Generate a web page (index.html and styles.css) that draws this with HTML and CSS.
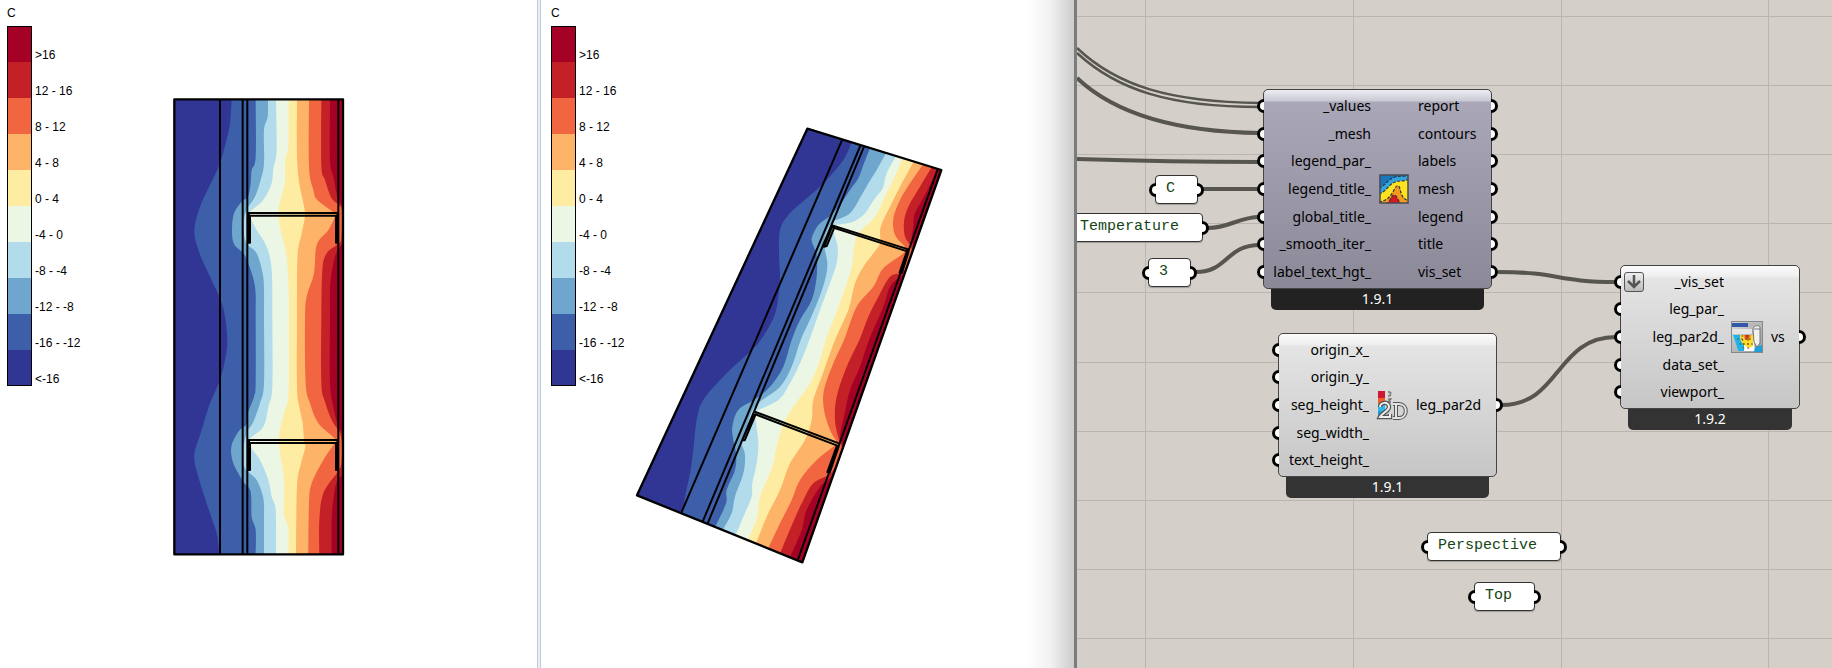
FILE: index.html
```html
<!DOCTYPE html>
<html lang="en">
<head>
<meta charset="utf-8">
<title>Thermal visualization</title>
<link rel="stylesheet" href="styles.css">
</head>
<body>
<main class="workspace">
  <section class="viewport viewport-top" aria-label="Top view">
    <svg class="scene" id="scene-top" aria-hidden="true"></svg>
    <div class="legend">
      <h2 class="legend-title">C</h2>
      <ul class="legend-list">
        <li class="t9">&gt;16</li><li class="t8">12 - 16</li><li class="t7">8 - 12</li><li class="t6">4 - 8</li><li class="t5">0 - 4</li>
        <li class="t4">-4 - 0</li><li class="t3">-8 - -4</li><li class="t2">-12 - -8</li><li class="t1">-16 - -12</li><li class="t0">&lt;-16</li>
      </ul>
    </div>
  </section>
  <div class="splitter"></div>
  <section class="viewport viewport-perspective" aria-label="Perspective view">
    <svg class="scene" id="scene-perspective" aria-hidden="true"></svg>
    <div class="legend">
      <h2 class="legend-title">C</h2>
      <ul class="legend-list">
        <li class="t9">&gt;16</li><li class="t8">12 - 16</li><li class="t7">8 - 12</li><li class="t6">4 - 8</li><li class="t5">0 - 4</li>
        <li class="t4">-4 - 0</li><li class="t3">-8 - -4</li><li class="t2">-12 - -8</li><li class="t1">-16 - -12</li><li class="t0">&lt;-16</li>
      </ul>
    </div>
  </section>
  <section class="canvas" aria-label="Node canvas">
    <svg class="wires" width="755" height="668" viewBox="1077 0 755 668" aria-hidden="true">
      <path class="grid" d="M1145.5 0V4000M1353.5 0V4000M1561.5 0V4000M1768.5 0V4000M1077 16.5H5000M1077 85.5H5000M1077 154.5H5000M1077 223.5H5000M1077 292.5H5000M1077 362.5H5000M1077 431.5H5000M1077 500.5H5000M1077 569.5H5000M1077 638.5H5000"/>
      <path class="wire thin" d="M1077 48C1117 86 1170 102 1260 103M1077 53C1117 90 1170 107 1260 107"/>
      <path class="wire" d="M1077 78C1115 114 1175 132 1260 133M1077 159C1140 161 1180 162 1260 162M1202 189H1260M1208 228C1230 228 1238 217 1260 217M1196 272C1228 272 1226 245 1260 245M1498 272C1560 272 1555 282 1616 282M1502 405C1560 405 1556 337 1616 337"/>
    </svg>

    <div class="panel panel-c port-in port-out">C</div>
    <div class="panel panel-temperature port-out">Temperature</div>
    <div class="panel panel-three port-in port-out">3</div>
    <div class="panel panel-perspective port-in port-out">Perspective</div>
    <div class="panel panel-top port-in port-out">Top</div>

    <article class="node node-mesh selected">
      <div class="node-body">
        <ul class="inputs"><li>_values</li><li>_mesh</li><li>legend_par_</li><li>legend_title_</li><li>global_title_</li><li>_smooth_iter_</li><li>label_text_hgt_</li></ul>
        <svg class="icon" width="30" height="30" viewBox="0 0 30 30" aria-hidden="true">
          <clipPath id="m"><rect x="1" y="1" width="28" height="28"/></clipPath>
          <g clip-path="url(#m)">
            <rect width="30" height="30" fill="#1877bd"/>
            <path d="M0 14C6 12 9 5 16 3S26 4 30 0V30H0Z" fill="#35a4dc"/>
            <path d="M0 20C7 18 10 10 16 8S25 8 30 5V30H0Z" fill="#ffe21f"/>
            <path d="M0 28C8 27 12 22 15 16S20 11 21 15S23 25 30 27V30H0Z" fill="#f59a1c"/>
            <path d="M7 30C12 27 12 21 15 21S19 27 22 30Z" fill="#d81921"/>
            <path d="M0 14C6 12 9 5 16 3S26 4 30 0M0 20C7 18 10 10 16 8S25 8 30 5M0 28C8 27 12 22 15 16S20 11 21 15S23 25 30 27M7 30C12 27 12 21 15 21S19 27 22 30" fill="none" stroke="#2b3540" stroke-width="1.2" stroke-dasharray="3 1.5"/>
          </g>
          <rect x="1" y="1" width="28" height="28" fill="none" stroke="#4a4a52" stroke-width="1.5"/>
        </svg>
        <ul class="outputs"><li>report</li><li>contours</li><li>labels</li><li>mesh</li><li>legend</li><li>title</li><li>vis_set</li></ul>
      </div>
      <footer class="version">1.9.1</footer>
    </article>

    <article class="node node-legend">
      <div class="node-body">
        <ul class="inputs"><li>origin_x_</li><li>origin_y_</li><li>seg_height_</li><li>seg_width_</li><li>text_height_</li></ul>
        <svg class="icon" width="32" height="30" viewBox="0 0 32 30" aria-hidden="true">
          <path d="M2 1H9V8H2Z" fill="#ce1733"/><path d="M2 8H9V14H2Z" fill="#f2602a"/><path d="M2 14H9V21H2Z" fill="#32b6e9"/><path d="M2 21H9V28H2Z" fill="#2496d4"/>
          <path d="M12 2H14Q16 3 14 4Q16 6 12 6M12 9H15L12 12H15" fill="none" stroke="#777" stroke-width="1.3"/>
          <path d="M4 17C4 12 13 11 13 17C13 21 6 23 4 27H14V24" fill="none" stroke="#555" stroke-width="4.5"/>
          <path d="M4 17C4 12 13 11 13 17C13 21 6 23 4 27H14V24" fill="none" stroke="#ededed" stroke-width="2"/>
          <path d="M17 14H23C32 14 32 28 23 28H17M20 14V28" fill="none" stroke="#555" stroke-width="4"/>
          <path d="M17 14H23C32 14 32 28 23 28H17M20 14V28" fill="none" stroke="#e4e4e4" stroke-width="2"/>
        </svg>
        <ul class="outputs"><li>leg_par2d</li></ul>
      </div>
      <footer class="version">1.9.1</footer>
    </article>

    <article class="node node-vis">
      <div class="node-body">
        <button class="expand" type="button" aria-label="Expand inputs">
          <svg width="14" height="14" viewBox="0 0 14 14" aria-hidden="true"><path d="M7 0V11M1 6L7 12L13 6" fill="none" stroke="#555" stroke-width="2.5"/></svg>
        </button>
        <ul class="inputs"><li>_vis_set</li><li>leg_par_</li><li>leg_par2d_</li><li>data_set_</li><li>viewport_</li></ul>
        <svg class="icon" width="32" height="32" viewBox="0 0 32 32" aria-hidden="true">
          <defs><linearGradient id="w" x2="1" y2="1"><stop stop-color="#d8d8d8"/><stop offset="1" stop-color="#999"/></linearGradient></defs>
          <rect x=".5" y=".5" width="31" height="31" fill="url(#w)" stroke="#888"/>
          <path d="M1 2H17V6H1Z" fill="#3158aa"/><path d="M17 2H31V6H17Z" fill="#b8b8b8"/>
          <path d="M1 8H21V13H1Z" fill="#e5e5e5"/>
          <path d="M2 14H22L24 30H7Z" fill="#fff"/>
          <path d="M2 14H9L10 20L13 24V30H7Z" fill="#20b3e8"/>
          <path d="M9 14H22V25L18 27L13 24L10 20Z" fill="#ffdc25"/>
          <path d="M12 14H20L19 19H14Z" fill="#f58a20"/><path d="M14 14H18L17 18H15Z" fill="#d92b22"/>
          <path d="M6 18H22M8 23H22M11 14L13 29M17 14V29" stroke="#6b5a2e" stroke-width="1" stroke-dasharray="2 2" fill="none"/>
          <path d="M24 26L31 24V31H23Z" fill="#1f9fd8"/>
          <path d="M22 8C22 5 29 3 29 7V22L26 26L23 21Z" fill="#f1f1f1" stroke="#777"/><path d="M23 8H29" stroke="#777"/>
        </svg>
        <ul class="outputs"><li>vs</li></ul>
      </div>
      <footer class="version">1.9.2</footer>
    </article>
  </section>
</main>
<script src="contours.js"></script>
</body>
</html>
```
FILE: styles.css
```css
*, *::before, *::after { box-sizing: border-box; }
body { margin: 0; background: #fff; color: #000; font-family: "Liberation Sans", Arial, sans-serif; }
ul { list-style: none; margin: 0; padding: 0; }

.workspace { display: flex; min-height: 100vh; overflow: hidden; }
.viewport { position: relative; overflow: hidden; background: #fff; }
.viewport-top { flex: 537 1 0; }
.viewport-perspective { flex: 533 1 0; }
.viewport-perspective::after { content: ""; position: absolute; inset: 0 0 0 auto; width: 48px; background: linear-gradient(90deg, rgba(0, 0, 0, 0), rgba(0, 0, 0, .05) 50%, rgba(0, 0, 0, .2)); }
.splitter { flex: none; width: 4px; background: #e9edf5; border: solid #c1c9dc; border-width: 0 1px; }
.scene { position: absolute; inset: 0; width: 100%; height: 100%; }

.legend { position: relative; padding: 5px 0 0 7px; font-size: 12px; }
.viewport-perspective .legend { padding-left: 10px; }
.legend-title { margin: 0 0 5px; font-size: 12px; font-weight: 400; line-height: 16px; }
.legend-list li { display: flex; align-items: flex-end; gap: 3px; height: 36px; line-height: 14px; }
.legend-list li::before { content: ""; width: 25px; align-self: stretch; background: var(--band); border: solid #000; border-width: 0 1px; }
.legend-list li:first-child::before { border-top-width: 1px; }
.legend-list li:last-child::before { border-bottom-width: 1px; }
.t0 { --band: #313695; }
.t1 { --band: #3d5ea8; }
.t2 { --band: #6ea6ce; }
.t3 { --band: #b2dceb; }
.t4 { --band: #ebf7e4; }
.t5 { --band: #feeca2; }
.t6 { --band: #fdb468; }
.t7 { --band: #f16641; }
.t8 { --band: #c42027; }
.t9 { --band: #a50026; }
.band { fill: var(--band); }
.edge { fill: none; stroke: #000; stroke-width: 6; stroke-linejoin: round; }
.edge.outline { stroke-width: 7; }

.canvas { position: relative; flex: 755 1 0; overflow: hidden; background: #d4cfc8; border-left: 3px solid #7c7c7c; }
.wires { position: absolute; top: 0; left: 0; overflow: visible; }
.grid { stroke: #bab6af; fill: none; }
.wire { fill: none; stroke: #565550; stroke-width: 4; }
.wire.thin { stroke-width: 2.5; }

.panel { position: absolute; height: 29px; padding: 0 10px; background: #fff; border: 1px solid #333; border-radius: 4px; box-shadow: 0 1px 1px rgba(0, 0, 0, .25); color: #154515; font: 15px/25px "Liberation Mono", "Courier New", monospace; }
.panel-c { left: 78px; top: 175px; width: 43px; }
.panel-temperature { left: -8px; top: 213px; width: 134px; }
.panel-three { left: 71px; top: 258px; width: 43px; }
.panel-perspective { left: 350px; top: 532px; width: 134px; }
.panel-top { left: 397px; top: 582px; width: 61px; }

.port-in::before, .port-out::after, .inputs li::before, .outputs li::after { content: ""; position: absolute; top: 50%; width: 7px; height: 14px; margin-top: -7px; background: #fff; border: 3px solid #000; }
.port-in::before, .inputs li::before { left: -7px; border-right: 0; border-radius: 7px 0 0 7px; }
.port-out::after, .outputs li::after { right: -7px; border-left: 0; border-radius: 0 7px 7px 0; }

.node { position: absolute; font: 14px/20px "Noto Sans", sans-serif; }
.node-body { position: relative; display: grid; align-items: center; height: 144px; padding: 2px 0; border: 1px solid #444; border-radius: 5px; background: linear-gradient(#fcfcfc, #ededed 11px, #e4e4e4 12px, #c6c6c6); }
.inputs, .outputs { display: grid; grid-auto-rows: 1fr; height: 100%; }
.inputs li, .outputs li { position: relative; display: flex; align-items: center; }
.inputs li { justify-content: flex-end; }
.outputs li { padding-left: 1px; }
.icon { justify-self: center; }
.version { height: 21px; margin: 0 8px; border-radius: 0 0 5px 5px; background: #333; color: #fff; text-align: center; line-height: 19px; }

.node-mesh { left: 186px; top: 89px; width: 229px; }
.node-mesh .node-body { height: 200px; grid-template-columns: 107px 46px 1fr; }
.selected .node-body { background: linear-gradient(#ededf3, #c9c9d4 11px, #aaa8b8 12px, #8b8998); }
.selected .version { background: #222; }
.node-legend { left: 201px; top: 333px; width: 219px; }
.node-legend .node-body { grid-template-columns: 90px 46px 1fr; }
.node-vis { left: 543px; top: 265px; width: 180px; }
.node-vis .node-body { grid-template-columns: 103px 46px 1fr; }
.expand { position: absolute; left: 3px; top: 6px; display: grid; place-items: center; width: 20px; height: 20px; padding: 0; border: 1px solid #555; border-radius: 3px; background: linear-gradient(#eee, #bbb); }
```
FILE: contours.js
```js
// Isotherm control points, from cold to warm. Each span is [dx, dy, "x,y x,y ..."].
const topView = {
  view: [160, 90],
  outline: [[43, 28], [549, 28], [549, 1393], [43, 1393]],
  far: [[700, 1500], [700, -60]],
  contours: [
    [[0, 0, "215,27 210,100 197,160 178,225 150,285 120,350 103,420 115,480 145,550 180,625 195,680"], [0, 690, "202,60 197,110 180,180 150,250 125,330 103,405 115,470 150,580 170,640 178,703"]],
    [[0, 0, "287,27 287,200 275,240 272,280 264,320 245,335 222,370 216,420 222,462 250,490 265,520 285,590 287,680"], [0, 690, "287,190 282,230 265,275 260,312 235,335 214,380 220,430 250,485 272,515 275,590 287,630 287,703"]],
    [[0, 0, "324,27 323,80 312,120 312,220 302,270 285,320 262,355 252,390 253,440 264,465 290,490 308,550 312,600 312,680"], [0, 690, "312,190 300,250 280,305 262,335 251,380 252,435 264,455 290,480 310,535 312,600 312,703"]],
    [[0, 0, "348,27 350,180 340,235 335,280 310,330 268,367 272,385 290,420 320,470 335,540 337,680"], [0, 690, "337,200 325,260 310,320 270,357 275,385 300,420 325,480 335,530 347,570 348,703"]],
    [[0, 0, "386,27 385,165 376,210 374,280 360,335 355,370 362,420 380,500 386,600 387,680"], [0, 690, "386,215 372,280 362,320 356,358 362,410 372,480 372,580 385,625 385,703"]],
    [[0, 0, "411,27 411,200 418,280 428,330 435,375 425,430 413,490 411,600 411,680"], [0, 690, "411,200 418,260 428,310 432,360 436,380 423,430 411,500 408,703"]],
    [[0, 0, "447,27 447,230 460,300 472,330 520,367 525,378 505,420 470,465 462,550 440,620 435,690"], [0, 690, "437,190 450,250 475,310 525,357 520,375 490,420 455,490 447,550 445,703"]],
    [[0, 0, "484,27 484,225 495,270 515,325 543,352 546,390 543,450 530,465 500,490 487,540 484,690"], [0, 690, "484,190 495,245 515,300 540,340 546,380 543,435 530,460 490,520 478,600 478,703"]],
    [[0, 0, "510,27 510,210 520,260 533,325 548,352 552,390 550,450 538,475 525,500 511,580 510,690"], [0, 690, "510,190 520,260 535,320 549,345 553,400 548,460 530,485 520,540 515,600 515,703"]]
  ],
  edges: "M180 28V1393M248 28V1393M262 28V1393M535 28V1393M262 369H535M268 377H532M267 370V458H270V377M533 372V458H528V377M262 1050H535M268 1059H532M267 1050V1140H270V1060M533 1052V1140H528V1060"
};

const perspectiveView = {
  view: [620 - 541, 110],
  outline: [[562, 56], [964, 180], [547, 1357], [51, 1156]],
  far: [[1400, 1700], [1400, -200]],
  contours: [
    [[360, 0, "335,97 310,150 255,215 200,265 145,315 120,360 117,430 120,500 115,560 102,620 62,690"], [0, 690, "385,40 320,100 250,180 230,240 220,330 210,400 195,470 187,523"]],
    [[360, 0, "390,115 372,160 355,205 330,240 300,285 270,318 235,345 215,385 222,412 230,435 230,500 215,570 180,630 155,690"], [0, 690, "490,80 450,140 405,178 355,210 337,260 340,300 348,340 345,390 320,450 318,490 287,558"]],
    [[360, 0, "438,130 410,180 388,215 365,255 330,310 280,335 262,360 252,400 262,460 255,510 235,570 205,640 182,690"], [0, 690, "515,80 480,140 420,185 395,215 375,280 365,310 375,345 370,400 345,470 335,520 310,567"]],
    [[360, 0, "467,140 440,190 428,235 405,265 375,310 340,335 285,347 282,370 293,410 290,460 270,520 240,600 208,690"], [0, 690, "540,70 510,130 475,180 405,217 407,240 415,310 410,370 397,430 395,470 370,530 348,583"]],
    [[360, 0, "487,147 460,210 430,270 405,320 360,365 345,395 335,470 310,550 280,630 257,690"], [0, 690, "600,60 570,130 510,215 485,265 470,320 455,385 420,470 412,530 385,598"]],
    [[360, 0, "520,157 480,230 450,290 422,350 420,400 400,430 370,470 345,520 325,600 285,690"], [0, 690, "605,110 580,180 575,240 555,300 510,370 480,450 440,530 410,606"]],
    [[360, 0, "550,162 510,220 480,270 460,325 465,375 495,412 490,430 430,475 400,530 350,590 312,690"], [0, 690, "640,70 612,150 612,210 630,270 653,312 640,320 590,360 540,420 515,480 480,550 447,620"]],
    [[360, 0, "575,172 540,230 505,290 492,335 495,380 512,408 515,435 500,470 485,488 450,500 415,560 385,620 358,690"], [0, 690, "680,80 650,170 645,240 657,300 665,325 650,370 630,402 580,430 550,480 520,545 482,635"]],
    [[360, 0, "592,178 560,245 525,310 520,350 515,385 522,420 505,480 480,500 450,530 430,590 387,690"], [0, 690, "720,80 690,150 672,230 660,290 670,330 645,400 625,420 600,440 560,510 545,570 513,645"]]
  ],
  edges: "M667 88L183 1210M722 105L248 1235M732 110L263 1240M953 178L533 1351M637 346L865 418M637 352L862 424M637 349L612 410L620 408L642 355M862 420L839 487L846 488L866 424M404 905L657 1000M404 912L652 1007M402 910L367 990L374 991L406 915M652 1004L622 1086L629 1088L657 1006"
};

const SVG = "http://www.w3.org/2000/svg";

function add(parent, tag, attributes) {
  const element = document.createElementNS(SVG, tag);
  for (const name in attributes) element.setAttribute(name, attributes[name]);
  parent.appendChild(element);
  return element;
}

function readPoints(spans) {
  return spans.flatMap(([dx, dy, text]) => text.split(" ").map(pair => {
    const [x, y] = pair.split(",").map(Number);
    return [x + dx, y + dy];
  }));
}

// Catmull-Rom curve through the points, run on past both ends.
function smooth(points) {
  const last = points.length - 1;
  const before = points[0].map((v, i) => 2 * v - points[1][i]);
  const after = points[last].map((v, i) => 2 * v - points[last - 1][i]);
  let d = `M${before}L${points[0]}`;
  for (let i = 0; i < last; i++) {
    const a = points[i - 1] || points[i], b = points[i], c = points[i + 1], e = points[i + 2] || c;
    d += `C${b[0] + (c[0] - a[0]) / 6},${b[1] + (c[1] - a[1]) / 6} ${c[0] - (e[0] - b[0]) / 6},${c[1] - (e[1] - b[1]) / 6} ${c}`;
  }
  return d + `L${after}`;
}

function draw(id, model) {
  const root = document.getElementById(id);
  const scene = add(root, "g", { transform: `translate(${model.view}) scale(${1 / 3})` });
  const clip = add(scene, "clipPath", { id: id + "-clip" });
  add(clip, "polygon", { points: model.outline.join(" ") });
  const bands = add(scene, "g", { "clip-path": `url(#${id}-clip)` });
  add(bands, "polygon", { class: "band t0", points: model.outline.join(" ") });
  model.contours.forEach((spans, i) => {
    add(bands, "path", { class: `band t${i + 1}`, d: smooth(readPoints(spans)) + `L${model.far.join("L")}Z` });
  });
  add(scene, "path", { class: "edge", d: model.edges });
  add(scene, "polygon", { class: "edge outline", points: model.outline.join(" ") });
}

draw("scene-top", topView);
draw("scene-perspective", perspectiveView);
```
